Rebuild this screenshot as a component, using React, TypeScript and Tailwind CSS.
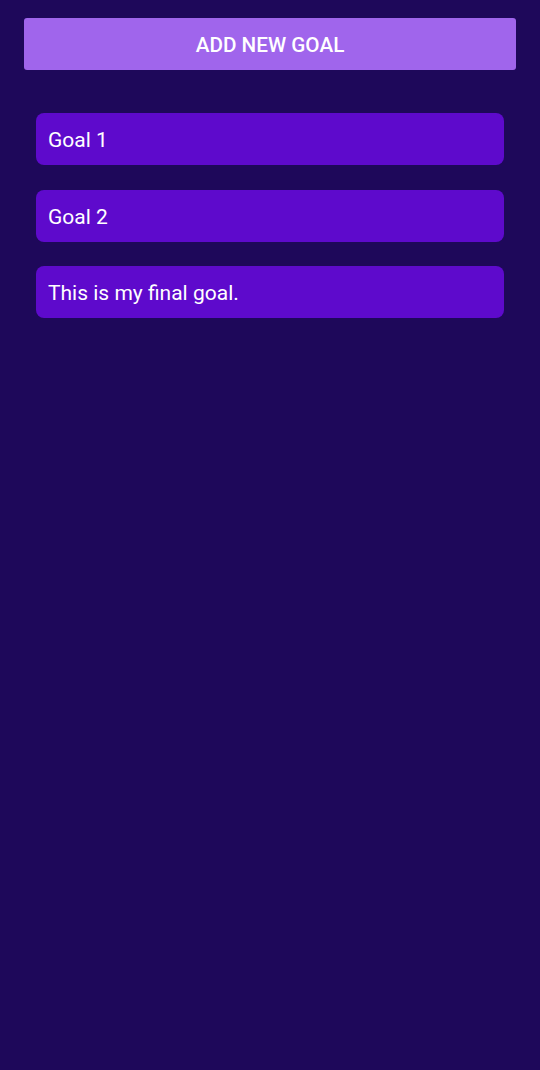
import React from 'react';

export default function App() {
  const goals = ['Goal 1', 'Goal 2', 'This is my final goal.'];

  return (
    <div
      className="min-h-[1070px] bg-[#1e085a] px-6 pt-[18px]"
      style={{ fontFamily: 'Roboto, "Noto Sans", sans-serif' }}
    >
      <button className="flex h-[52px] w-full items-center justify-center rounded-[3px] bg-[#a065ec] pt-1 text-[20.7px] font-medium text-white">
        ADD NEW GOAL
      </button>

      {/* Goals list */}
      <div className="mt-[43px] flex flex-col gap-[24.5px] px-3">
        {goals.map((goal, index) => (
          <div
            key={index}
            className="flex h-[52px] items-center rounded-lg bg-[#5e0acc] px-3 pt-1 text-[21px] text-white"
          >
            {goal}
          </div>
        ))}
      </div>
    </div>
  );
}
